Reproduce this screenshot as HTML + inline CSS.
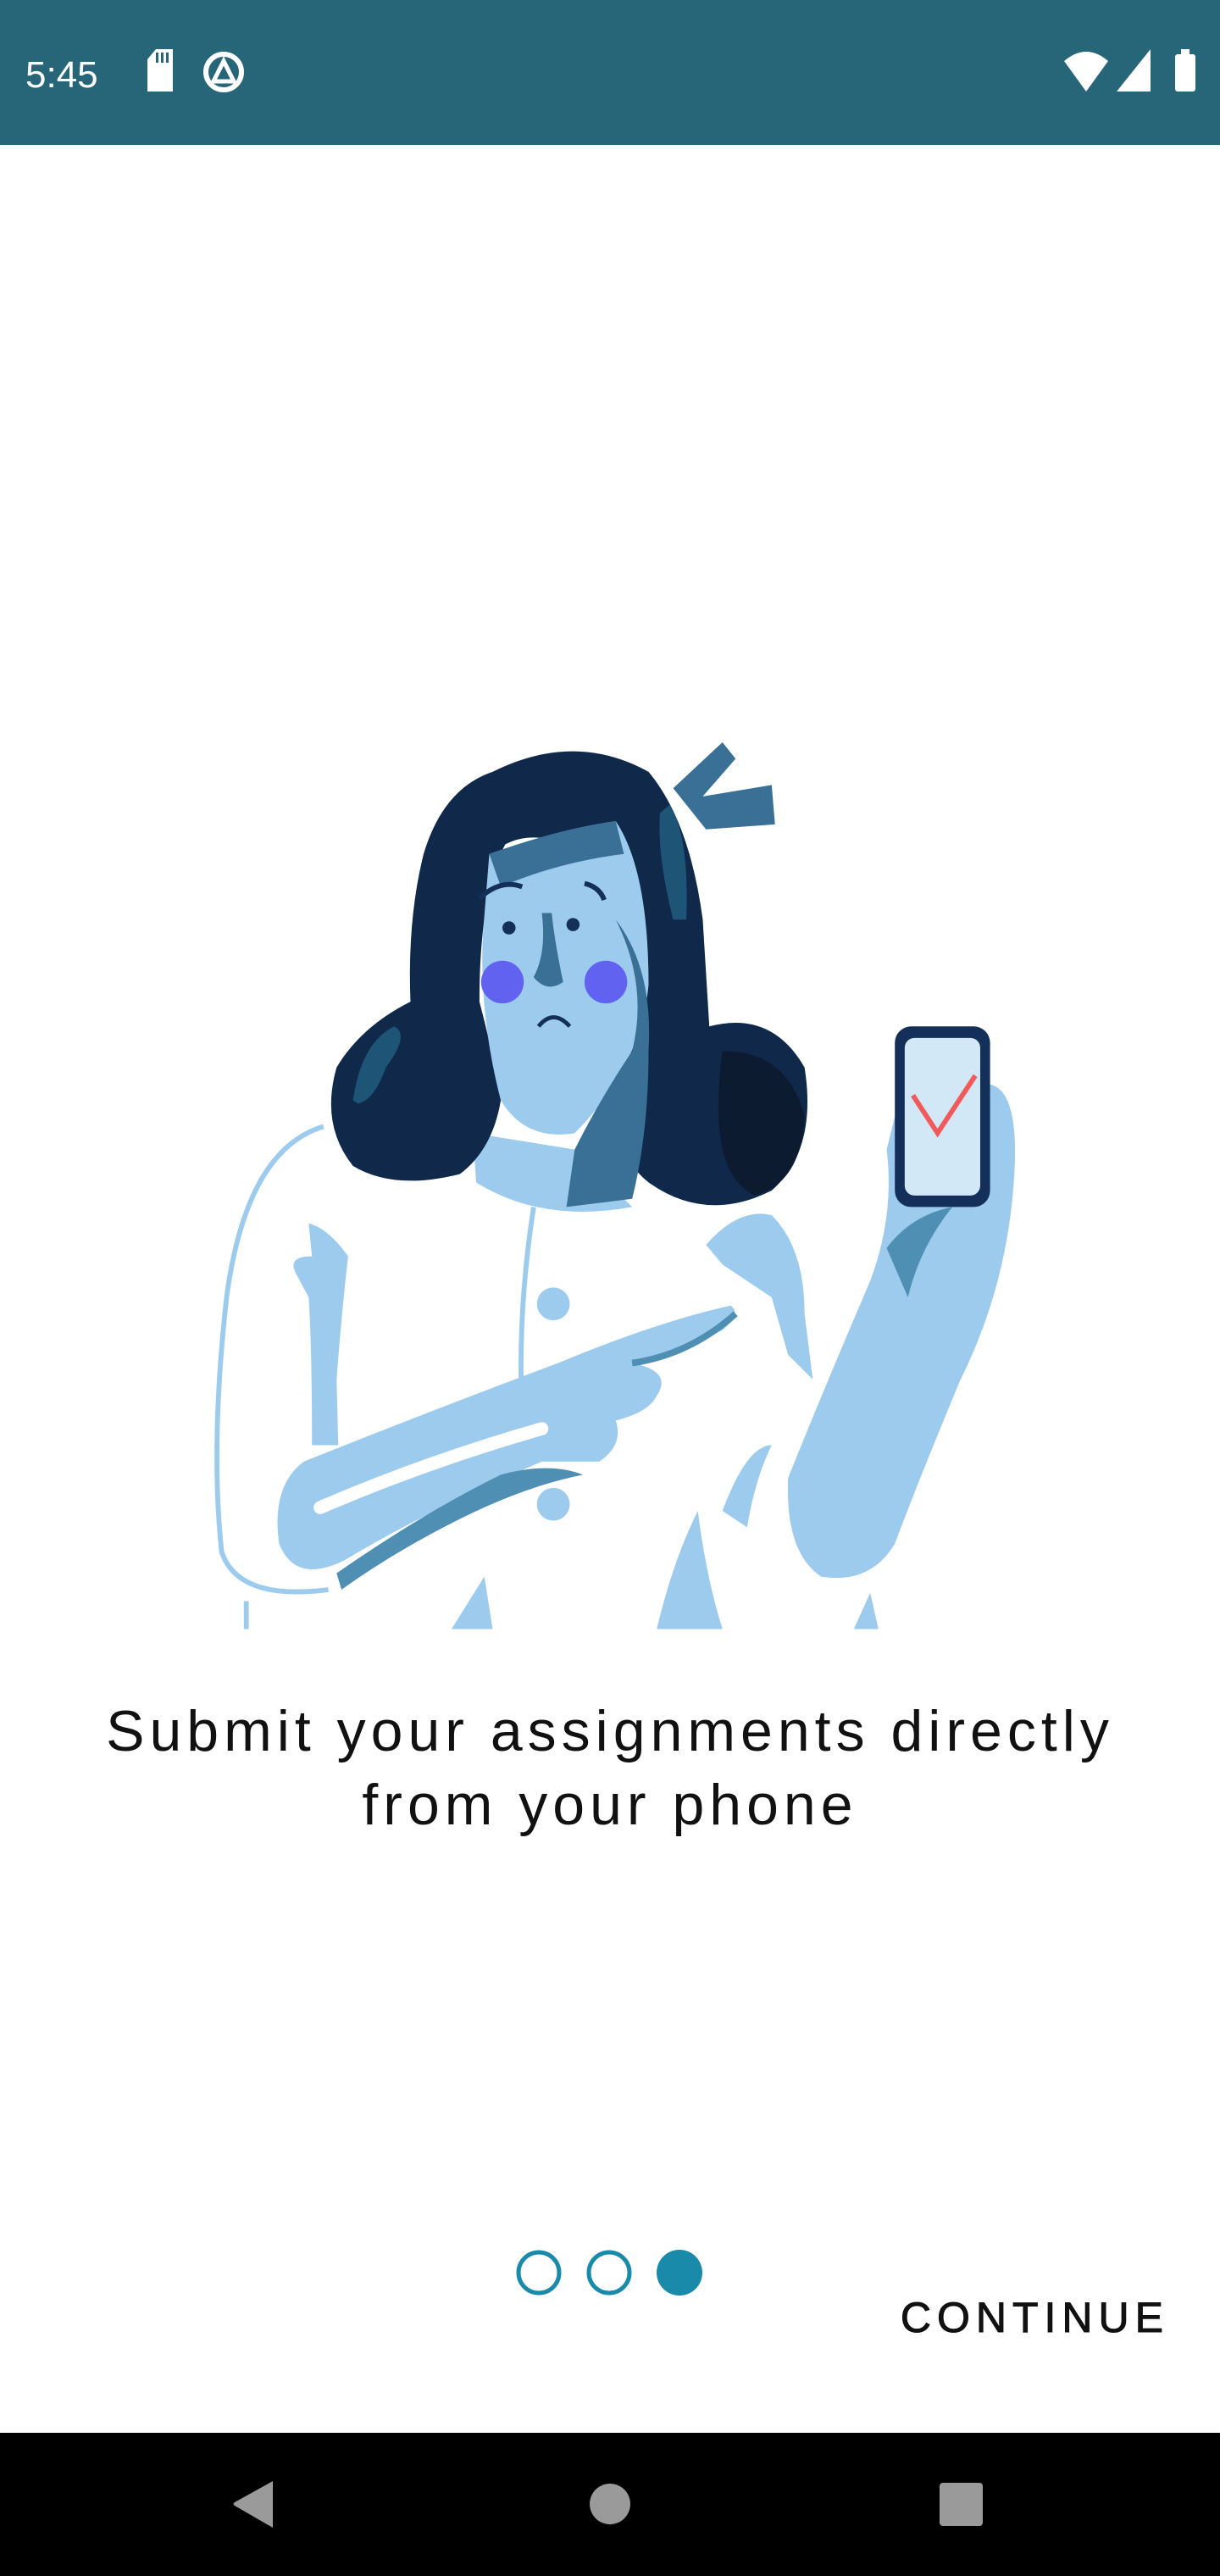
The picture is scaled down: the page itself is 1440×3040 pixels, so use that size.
<!DOCTYPE html>
<html><head><meta charset="utf-8"><style>
html,body{margin:0;padding:0;background:#fff;}
body{width:1440px;height:3040px;overflow:hidden;position:relative;font-family:"Liberation Sans",sans-serif;}
</style></head><body>
<svg width="1440" height="3040" viewBox="0 0 1440 3040" xmlns="http://www.w3.org/2000/svg" style="position:absolute;left:0;top:0">
<rect x="0" y="0" width="1440" height="171" fill="#276678"/>
<text x="30" y="103" font-family="Liberation Sans" font-size="44" fill="#fff">5:45</text>
<path d="M174 70 L184 58 L204 58 L204 108 L174 108 Z" fill="#fff"/>
<rect x="184" y="62" width="3" height="12" fill="#276678"/><rect x="190" y="62" width="3" height="12" fill="#276678"/><rect x="196" y="62" width="3" height="12" fill="#276678"/>
<circle cx="264" cy="85" r="21" fill="none" stroke="#fff" stroke-width="6"/>
<path d="M264 72 L276 96 L252 96 Z" fill="none" stroke="#fff" stroke-width="5"/>
<path d="M1256 72 Q1282 50 1308 72 L1282 108 Z" fill="#fff"/>
<path d="M1358 58 L1358 108 L1318 108 Z" fill="#fff"/>
<rect x="1387" y="64" width="24" height="44" rx="3" fill="#fff"/><rect x="1394" y="58" width="10" height="8" fill="#fff"/>

<g transform="scale(1.938)">
 <path d="M197 686 Q150 700 138 790 Q128 880 135 945 Q145 975 200 968" fill="none" stroke="#9ccbee" stroke-width="3"/>
 <path d="M150 975 L150 992" stroke="#9ccbee" stroke-width="3"/>
 <path d="M188 745 Q200 748 212 765 Q208 800 205 840 L206 880 L190 880 Q190 820 188 790 L180 775 Q175 765 190 765 Z" fill="#9ccbee"/>
 <path d="M288 690 L350 700 L385 735 Q330 745 290 720 Z" fill="#9ccbee"/>
 <path d="M350 700 L385 700 L385 730 L345 735 Z" fill="#3a6f96"/>
 <path d="M325 735 Q315 800 318 860" fill="none" stroke="#9ccbee" stroke-width="3"/>
 <circle cx="337" cy="794" r="10" fill="#9ccbee"/>
 <circle cx="337" cy="916" r="10" fill="#9ccbee"/>
 <path d="M430 758 Q450 735 470 740 Q490 760 490 800 L495 840 L480 825 L470 790 Q455 780 440 770 Z" fill="#9ccbee"/>
 <path d="M185 890 Q260 860 340 830 Q400 805 445 795 Q452 800 440 810 Q410 825 385 830 Q410 835 400 850 Q395 860 375 865 Q380 880 365 890 L330 890 Q260 920 210 950 Q180 965 170 940 Q165 905 185 890 Z" fill="#9ccbee"/>
 <path d="M195 918 Q260 890 330 870" fill="none" stroke="#fff" stroke-width="8" stroke-linecap="round"/>
 <path d="M205 958 Q260 920 305 898 Q335 890 355 898 Q320 905 280 925 Q240 945 208 968 Z" fill="#4f8fb3"/>
 <path d="M385 830 Q420 825 448 800" fill="none" stroke="#4f8fb3" stroke-width="4"/>
 <path d="M275 992 L295 960 L300 992 Z" fill="#9ccbee"/>
 <path d="M400 992 Q410 950 425 920 Q430 960 440 992 Z" fill="#9ccbee"/>
 <path d="M440 920 Q455 880 470 880 Q460 900 455 930 Z" fill="#9ccbee"/>
 <path d="M480 900 Q500 850 530 780 Q545 740 540 700 L550 660 L600 660 Q620 660 618 710 Q615 780 585 840 Q560 900 545 940 Q530 965 500 960 Q478 945 480 900 Z" fill="#9ccbee"/>
 <path d="M540 760 Q555 740 580 735 Q560 760 553 790 Z" fill="#4f8fb3"/>
 <path d="M520 992 L530 970 L535 992 Z" fill="#9ccbee"/>
 <rect x="545" y="625" width="58" height="110" rx="10" fill="#14305a"/>
 <rect x="551" y="632" width="46" height="96" rx="6" fill="#d2e8f7"/>
 <path d="M556 667 L571 690 L594 655" fill="none" stroke="#f05a5a" stroke-width="3"/>
 <path d="M410 480 L440 452 L448 462 L428 485 L470 478 L472 502 L430 505 Z" fill="#3a6f96"/>
 <path d="M300 470 Q350 445 395 470 Q420 500 428 560 L432 625 Q470 615 490 650 Q498 700 470 725 Q430 745 395 720 Q370 700 380 660 L385 600 Q380 560 360 520 Q320 500 300 520 Z" fill="#10284a"/>
 <path d="M300 470 Q270 480 258 520 Q248 560 250 610 Q220 625 205 650 Q195 685 215 710 Q240 725 280 715 Q300 700 305 670 Q300 640 292 610 Q292 540 310 510 Q320 495 330 490 Z" fill="#10284a"/>
 <path d="M215 670 Q220 635 240 625 Q250 630 235 650 Q228 670 218 672 Z" fill="#1e5577"/>
 <path d="M408 490 Q420 510 418 560 L410 560 Q400 520 402 495 Z" fill="#1e5577"/>
 <path d="M440 640 Q480 640 490 680 Q488 720 460 728 Q430 715 440 640 Z" fill="#0c1b30"/>
 <path d="M298 520 Q340 505 375 500 Q395 530 395 600 Q390 650 350 690 Q320 695 305 670 Q292 620 294 570 Z" fill="#9ccbee"/>
 <path d="M298 520 Q340 505 375 500 L380 520 Q340 525 305 540 Z" fill="#3a6f96"/>
 <path d="M375 560 Q395 600 385 640 Q365 670 350 700 L385 730 Q395 690 395 640 Q398 590 375 560 Z" fill="#3a6f96"/>
 <path d="M292 547 Q305 535 318 540" fill="none" stroke="#14305a" stroke-width="3"/>
 <path d="M356 538 Q365 540 368 548" fill="none" stroke="#14305a" stroke-width="3"/>
 <circle cx="310" cy="565" r="4" fill="#14305a"/><circle cx="349" cy="563" r="4" fill="#14305a"/>
 <path d="M330 556 Q333 580 325 595 Q333 605 343 598 Q338 575 336 556 Z" fill="#3a6f96"/>
 <circle cx="306" cy="598" r="13" fill="#6262f0"/><circle cx="369" cy="598" r="13" fill="#6262f0"/>
 <path d="M328 625 Q337 614 347 625" fill="none" stroke="#14305a" stroke-width="2.5"/>
</g>

<text x="720" y="2066" text-anchor="middle" font-family="Liberation Sans" font-size="68" letter-spacing="6" fill="#111">Submit your assignments directly</text>
<text x="720" y="2153" text-anchor="middle" font-family="Liberation Sans" font-size="68" letter-spacing="6" fill="#111">from your phone</text>

<circle cx="636" cy="2682" r="24" fill="none" stroke="#1a8aaa" stroke-width="5"/>
<circle cx="719" cy="2682" r="24" fill="none" stroke="#1a8aaa" stroke-width="5"/>
<circle cx="802" cy="2682" r="27" fill="#1a8aaa"/>
<text x="1380" y="2752" text-anchor="end" font-family="Liberation Sans" font-size="50" letter-spacing="7" fill="#111" stroke="#111" stroke-width="1">CONTINUE</text>

<rect x="0" y="2871" width="1440" height="169" fill="#000"/>
<path d="M322 2928 L322 2983 L277 2957 Q274 2955 277 2953 Z" fill="#9a9a9a"/>
<circle cx="720" cy="2955" r="24" fill="#9a9a9a"/>
<rect x="1109" y="2930" width="51" height="51" rx="4" fill="#9a9a9a"/>
</svg>
</body></html>
